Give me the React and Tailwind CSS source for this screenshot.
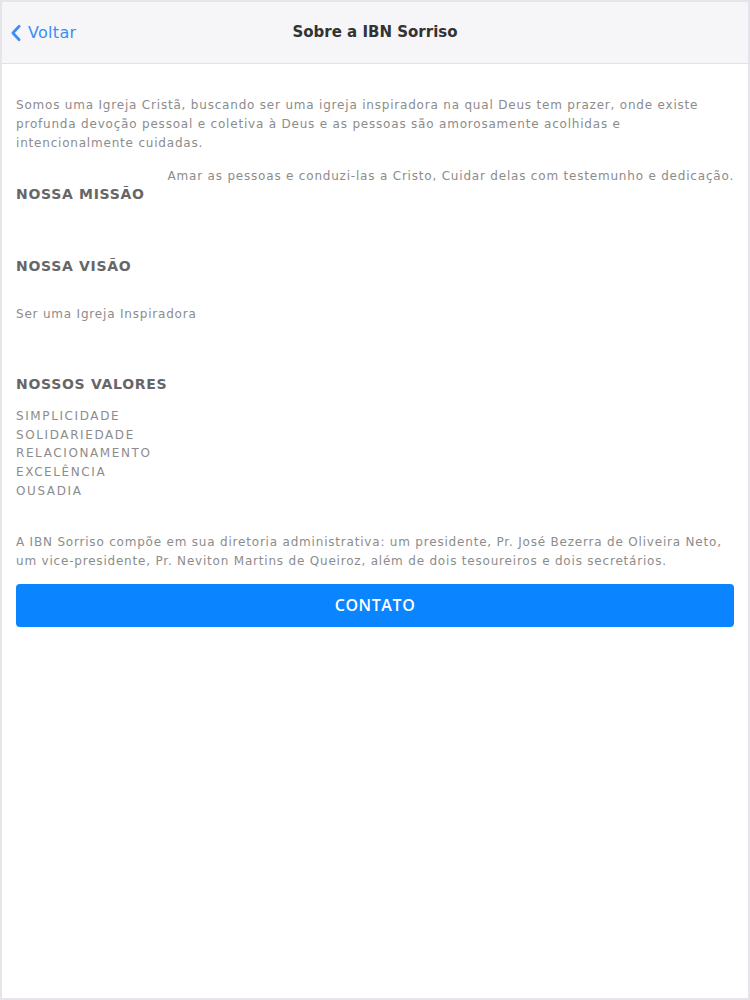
export default function App() {
  const valores = ["SIMPLICIDADE", "SOLIDARIEDADE", "RELACIONAMENTO", "EXCELÊNCIA", "OUSADIA"];

  return (
    <div
      className="min-h-[1000px] bg-white border-2 border-[#e6e4ea] flex flex-col"
      style={{ fontFamily: '"DejaVu Sans", "Noto Sans", sans-serif' }}
    >
      {/* cabeçalho */}
      <div className="h-[62px] bg-[#f6f5f8] border-b border-[#e2e1e6] flex items-center relative">
        <div className="flex items-center gap-[6px] pl-[8px] text-[#3d8ef5]">
          <svg viewBox="0 0 12 20" className="w-[12px] h-[18px]" fill="none" stroke="currentColor" strokeWidth="3" strokeLinecap="round" strokeLinejoin="round">
            <path d="M9.5 2.5 L2.5 10 L9.5 17.5" />
          </svg>
          <span className="text-[16px] tracking-[0.3px]">Voltar</span>
        </div>
        <div className="absolute left-0 right-0 text-center text-[15px] font-semibold text-[#333] pointer-events-none">
          Sobre a IBN Sorriso
        </div>
      </div>

      {/* conteúdo */}
      <div className="px-[14px] pt-[32px] text-[#8c8c8c] text-[12px] tracking-[0.8px] leading-[19px]">
        <p>
          Somos uma Igreja Cristã, buscando ser uma igreja inspiradora na qual Deus tem prazer, onde existe
          <br />
          profunda devoção pessoal e coletiva à Deus e as pessoas são amorosamente acolhidas e
          <br />
          intencionalmente cuidadas.
        </p>

        <p className="text-right mt-[14px] whitespace-nowrap">
          Amar as pessoas e conduzi-las a Cristo, Cuidar delas com testemunho e dedicação.
        </p>
        <h2 className="text-[14px] font-bold text-[#666] tracking-[0.7px] leading-[20px] mt-[-2px]">NOSSA MISSÃO</h2>

        <h2 className="text-[14px] font-bold text-[#666] tracking-[0.7px] leading-[20px] mt-[52px]">NOSSA VISÃO</h2>
        <p className="mt-[29px]">Ser uma Igreja Inspiradora</p>

        <h2 className="text-[14px] font-bold text-[#666] tracking-[0.7px] leading-[20px] mt-[50px]">NOSSOS VALORES</h2>
        <div className="mt-[13px] leading-[18.7px] tracking-[1.6px]">
          {valores.map((v) => (
            <div key={v}>{v}</div>
          ))}
        </div>

        <p className="mt-[32px]">
          A IBN Sorriso compõe em sua diretoria administrativa: um presidente, Pr. José Bezerra de Oliveira Neto,
          <br />
          um vice-presidente, Pr. Neviton Martins de Queiroz, além de dois tesoureiros e dois secretários.
        </p>

        <button
          className="mt-[13px] w-full h-[43px] rounded-[4px] bg-[#0a84ff] text-white text-[16px] font-semibold tracking-[0.6px]"
          style={{ fontFamily: '"Open Sans", sans-serif' }}
        >
          CONTATO
        </button>
      </div>
    </div>
  );
}
